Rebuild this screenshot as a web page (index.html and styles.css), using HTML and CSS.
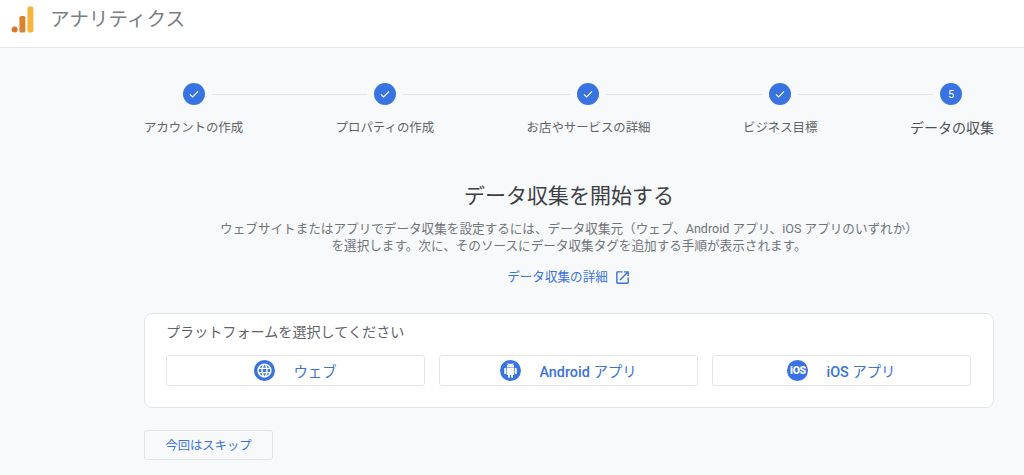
FILE: index.html
```html
<!DOCTYPE html>
<html lang="ja">
<head>
<meta charset="utf-8">
<title>アナリティクス</title>
<link rel="stylesheet" href="styles.css">
</head>
<body>
<header class="topbar">
  <svg class="logo" viewBox="0 0 24 28" width="24" height="28" aria-hidden="true">
    <circle cx="3.6" cy="23.4" r="3" fill="#d9762c"/>
    <rect x="8.4" y="10" width="6" height="16.5" rx="1.6" fill="#d9822f"/>
    <rect x="16.4" y="0.5" width="6" height="26" rx="2" fill="#f4b63f"/>
  </svg>
  <span class="product">アナリティクス</span>
</header>
<main class="page">
  <div class="track">
    <span class="dot"><svg viewBox="0 0 24 24" width="14" height="14"><path d="M5 12.6l4.6 4.4L19 7.6" fill="none" stroke="#fff" stroke-width="1.9"/></svg></span>
    <span class="line line-a"></span>
    <span class="dot"><svg viewBox="0 0 24 24" width="14" height="14"><path d="M5 12.6l4.6 4.4L19 7.6" fill="none" stroke="#fff" stroke-width="1.9"/></svg></span>
    <span class="line line-b"></span>
    <span class="dot"><svg viewBox="0 0 24 24" width="14" height="14"><path d="M5 12.6l4.6 4.4L19 7.6" fill="none" stroke="#fff" stroke-width="1.9"/></svg></span>
    <span class="line line-c"></span>
    <span class="dot"><svg viewBox="0 0 24 24" width="14" height="14"><path d="M5 12.6l4.6 4.4L19 7.6" fill="none" stroke="#fff" stroke-width="1.9"/></svg></span>
    <span class="line line-d"></span>
    <span class="dot dot-num">5</span>
  </div>
  <div class="labels">
    <span class="step-label">アカウントの作成</span>
    <span class="step-label">プロパティの作成</span>
    <span class="step-label">お店やサービスの詳細</span>
    <span class="step-label">ビジネス目標</span>
    <span class="step-label step-current">データの収集</span>
  </div>
  <section class="intro">
    <h1 class="title">データ収集を開始する</h1>
    <p class="desc">ウェブサイトまたはアプリでデータ収集を設定するには、データ収集元（ウェブ、Android アプリ、iOS アプリのいずれか）<br>を選択します。次に、そのソースにデータ収集タグを追加する手順が表示されます。</p>
    <a class="more" href="#">データ収集の詳細
      <svg viewBox="0 0 24 24" width="17" height="17"><path fill="#3a73dc" d="M19 19H5V5h7V3H5c-1.11 0-2 .9-2 2v14c0 1.1.89 2 2 2h14c1.1 0 2-.9 2-2v-7h-2v7zM14 3v2h3.59l-9.83 9.83 1.41 1.41L19 6.41V10h2V3h-7z"/></svg>
    </a>
  </section>
  <section class="card">
    <h2 class="card-title">プラットフォームを選択してください</h2>
    <div class="platforms">
      <button class="platform" type="button">
        <span class="picon"><svg viewBox="0 0 24 24" width="17" height="17"><path fill="#fff" d="M11.99 2C6.47 2 2 6.48 2 12s4.47 10 9.99 10C17.52 22 22 17.52 22 12S17.52 2 11.99 2zm6.93 6h-2.95c-.32-1.25-.78-2.45-1.38-3.56 1.84.63 3.37 1.91 4.33 3.56zM12 4.04c.83 1.2 1.48 2.53 1.91 3.96h-3.82c.43-1.43 1.08-2.76 1.91-3.96zM4.26 14C4.1 13.36 4 12.69 4 12s.1-1.36.26-2h3.38c-.08.66-.14 1.32-.14 2 0 .68.06 1.34.14 2H4.26zm.82 2h2.95c.32 1.25.78 2.45 1.38 3.56-1.84-.63-3.37-1.9-4.33-3.56zm2.95-8H5.08c.96-1.66 2.49-2.93 4.33-3.56C8.81 5.55 8.35 6.75 8.03 8zM12 19.96c-.83-1.2-1.48-2.53-1.91-3.96h3.82c-.43 1.43-1.08 2.76-1.91 3.96zM14.34 14H9.66c-.09-.66-.16-1.32-.16-2 0-.68.07-1.35.16-2h4.68c.09.65.16 1.32.16 2 0 .68-.07 1.34-.16 2zm.25 5.56c.6-1.11 1.06-2.31 1.38-3.56h2.95c-.96 1.65-2.49 2.93-4.33 3.56zM16.36 14c.08-.66.14-1.32.14-2 0-.68-.06-1.34-.14-2h3.38c.16.64.26 1.31.26 2s-.1 1.36-.26 2h-3.38z"/></svg></span>
        <span>ウェブ</span>
      </button>
      <button class="platform" type="button">
        <span class="picon"><svg viewBox="0 0 24 24" width="15" height="15"><path fill="#fff" d="M6 18c0 .55.45 1 1 1h1v3.5c0 .83.67 1.5 1.5 1.5s1.5-.67 1.5-1.5V19h2v3.5c0 .83.67 1.5 1.5 1.5s1.5-.67 1.5-1.5V19h1c.55 0 1-.45 1-1V8H6v10zM3.5 8C2.67 8 2 8.67 2 9.5v7c0 .83.67 1.5 1.5 1.5S5 17.33 5 16.5v-7C5 8.67 4.33 8 3.5 8zm17 0c-.83 0-1.5.67-1.5 1.5v7c0 .83.67 1.5 1.5 1.5s1.5-.67 1.5-1.5v-7c0-.83-.67-1.5-1.5-1.5zm-4.97-5.84l1.3-1.3c.2-.2.2-.51 0-.71-.2-.2-.51-.2-.71 0l-1.48 1.48C13.85 1.23 12.95 1 12 1c-.96 0-1.86.23-2.66.63L7.85.15c-.2-.2-.51-.2-.71 0-.2.2-.2.51 0 .71l1.31 1.31C6.97 3.26 6 5.01 6 7h12c0-1.99-.97-3.75-2.47-4.84zM10 5H9V4h1v1zm5 0h-1V4h1v1z"/></svg></span>
        <span><b class="latin">Android</b> アプリ</span>
      </button>
      <button class="platform" type="button">
        <span class="picon picon-ios">iOS</span>
        <span><b class="latin">iOS</b> アプリ</span>
      </button>
    </div>
  </section>
  <button class="skip" type="button">今回はスキップ</button>
</main>
</body>
</html>
```
FILE: styles.css
```css
* { box-sizing: border-box; }
html, body { margin: 0; padding: 0; }
body {
  background: #f8f9fb;
  font-family: Roboto, "Noto Sans CJK JP", sans-serif;
  color: #5f6368;
  overflow: hidden;
  height: 475px;
}
.topbar {
  display: flex;
  align-items: center;
  height: 48px;
  padding: 0 0 7px 11px;
  background: #fff;
  border-bottom: 1px solid #e6e7ea;
}
.logo { flex: none; }
.product {
  margin-left: 15px;
  font-size: 19.6px;
  color: #7a7f84;
  line-height: 1;
}
.page { padding: 35px 30px 0 144px; }
.track {
  display: flex;
  align-items: center;
  padding-left: 39px;
  height: 22px;
}
.dot {
  flex: none;
  display: flex;
  align-items: center;
  justify-content: center;
  width: 22px;
  height: 22px;
  border-radius: 50%;
  background: #3973e2;
}
.dot-num { color: #fff; font-size: 11px; }
.line { flex: none; height: 1px; margin: 0 7px; background: #e2e4e8; }
.line-a { width: 155px; }
.line-b { width: 167px; }
.line-c { width: 156px; }
.line-d { width: 135px; }
.labels {
  display: flex;
  justify-content: space-between;
  align-items: center;
  height: 20px;
  margin-top: 13px;
}
.step-label { font-size: 12.4px; line-height: 20px; white-space: nowrap; }
.step-current { font-size: 14px; color: #4d5156; }
.intro { text-align: center; margin-top: 43px; }
.title {
  margin: 0;
  font-size: 21px;
  font-weight: 400;
  line-height: 30px;
  color: #3c4043;
}
.desc {
  margin: 9px 0 0;
  font-size: 12.6px;
  line-height: 17px;
  color: #70757a;
  white-space: nowrap;
}
.more {
  display: inline-flex;
  align-items: center;
  gap: 6px;
  margin-top: 14px;
  font-size: 12.6px;
  line-height: 18px;
  color: #3a73dc;
  text-decoration: none;
}
.card {
  height: 95px;
  margin-top: 27px;
  padding: 8px 21px 0;
  background: #fff;
  border: 1px solid #e3e5e8;
  border-radius: 8px;
}
.card-title {
  margin: 0;
  font-size: 14.1px;
  font-weight: 400;
  line-height: 20px;
  color: #5f6368;
}
.platforms { display: flex; gap: 14px; margin-top: 13px; }
.platform {
  flex: none;
  width: 259px;
  height: 31px;
  display: flex;
  align-items: center;
  justify-content: center;
  gap: 18px;
  padding: 0;
  background: #fff;
  border: 1px solid #e3e5e8;
  border-radius: 3px;
  font: inherit;
  font-size: 14.4px;
  color: #3a73dc;
}
.latin { font-weight: 500; }
.picon {
  flex: none;
  display: flex;
  align-items: center;
  justify-content: center;
  width: 21px;
  height: 21px;
  border-radius: 50%;
  background: #3973e2;
}
.picon-ios { color: #fff; font-size: 10.5px; font-weight: 900; letter-spacing: -0.3px; }
.skip {
  display: block;
  width: 129px;
  height: 30px;
  margin-top: 22px;
  padding: 0;
  background: transparent;
  border: 1px solid #e0e2e6;
  border-radius: 3px;
  font: inherit;
  font-size: 12.3px;
  color: #3a73dc;
}
```
